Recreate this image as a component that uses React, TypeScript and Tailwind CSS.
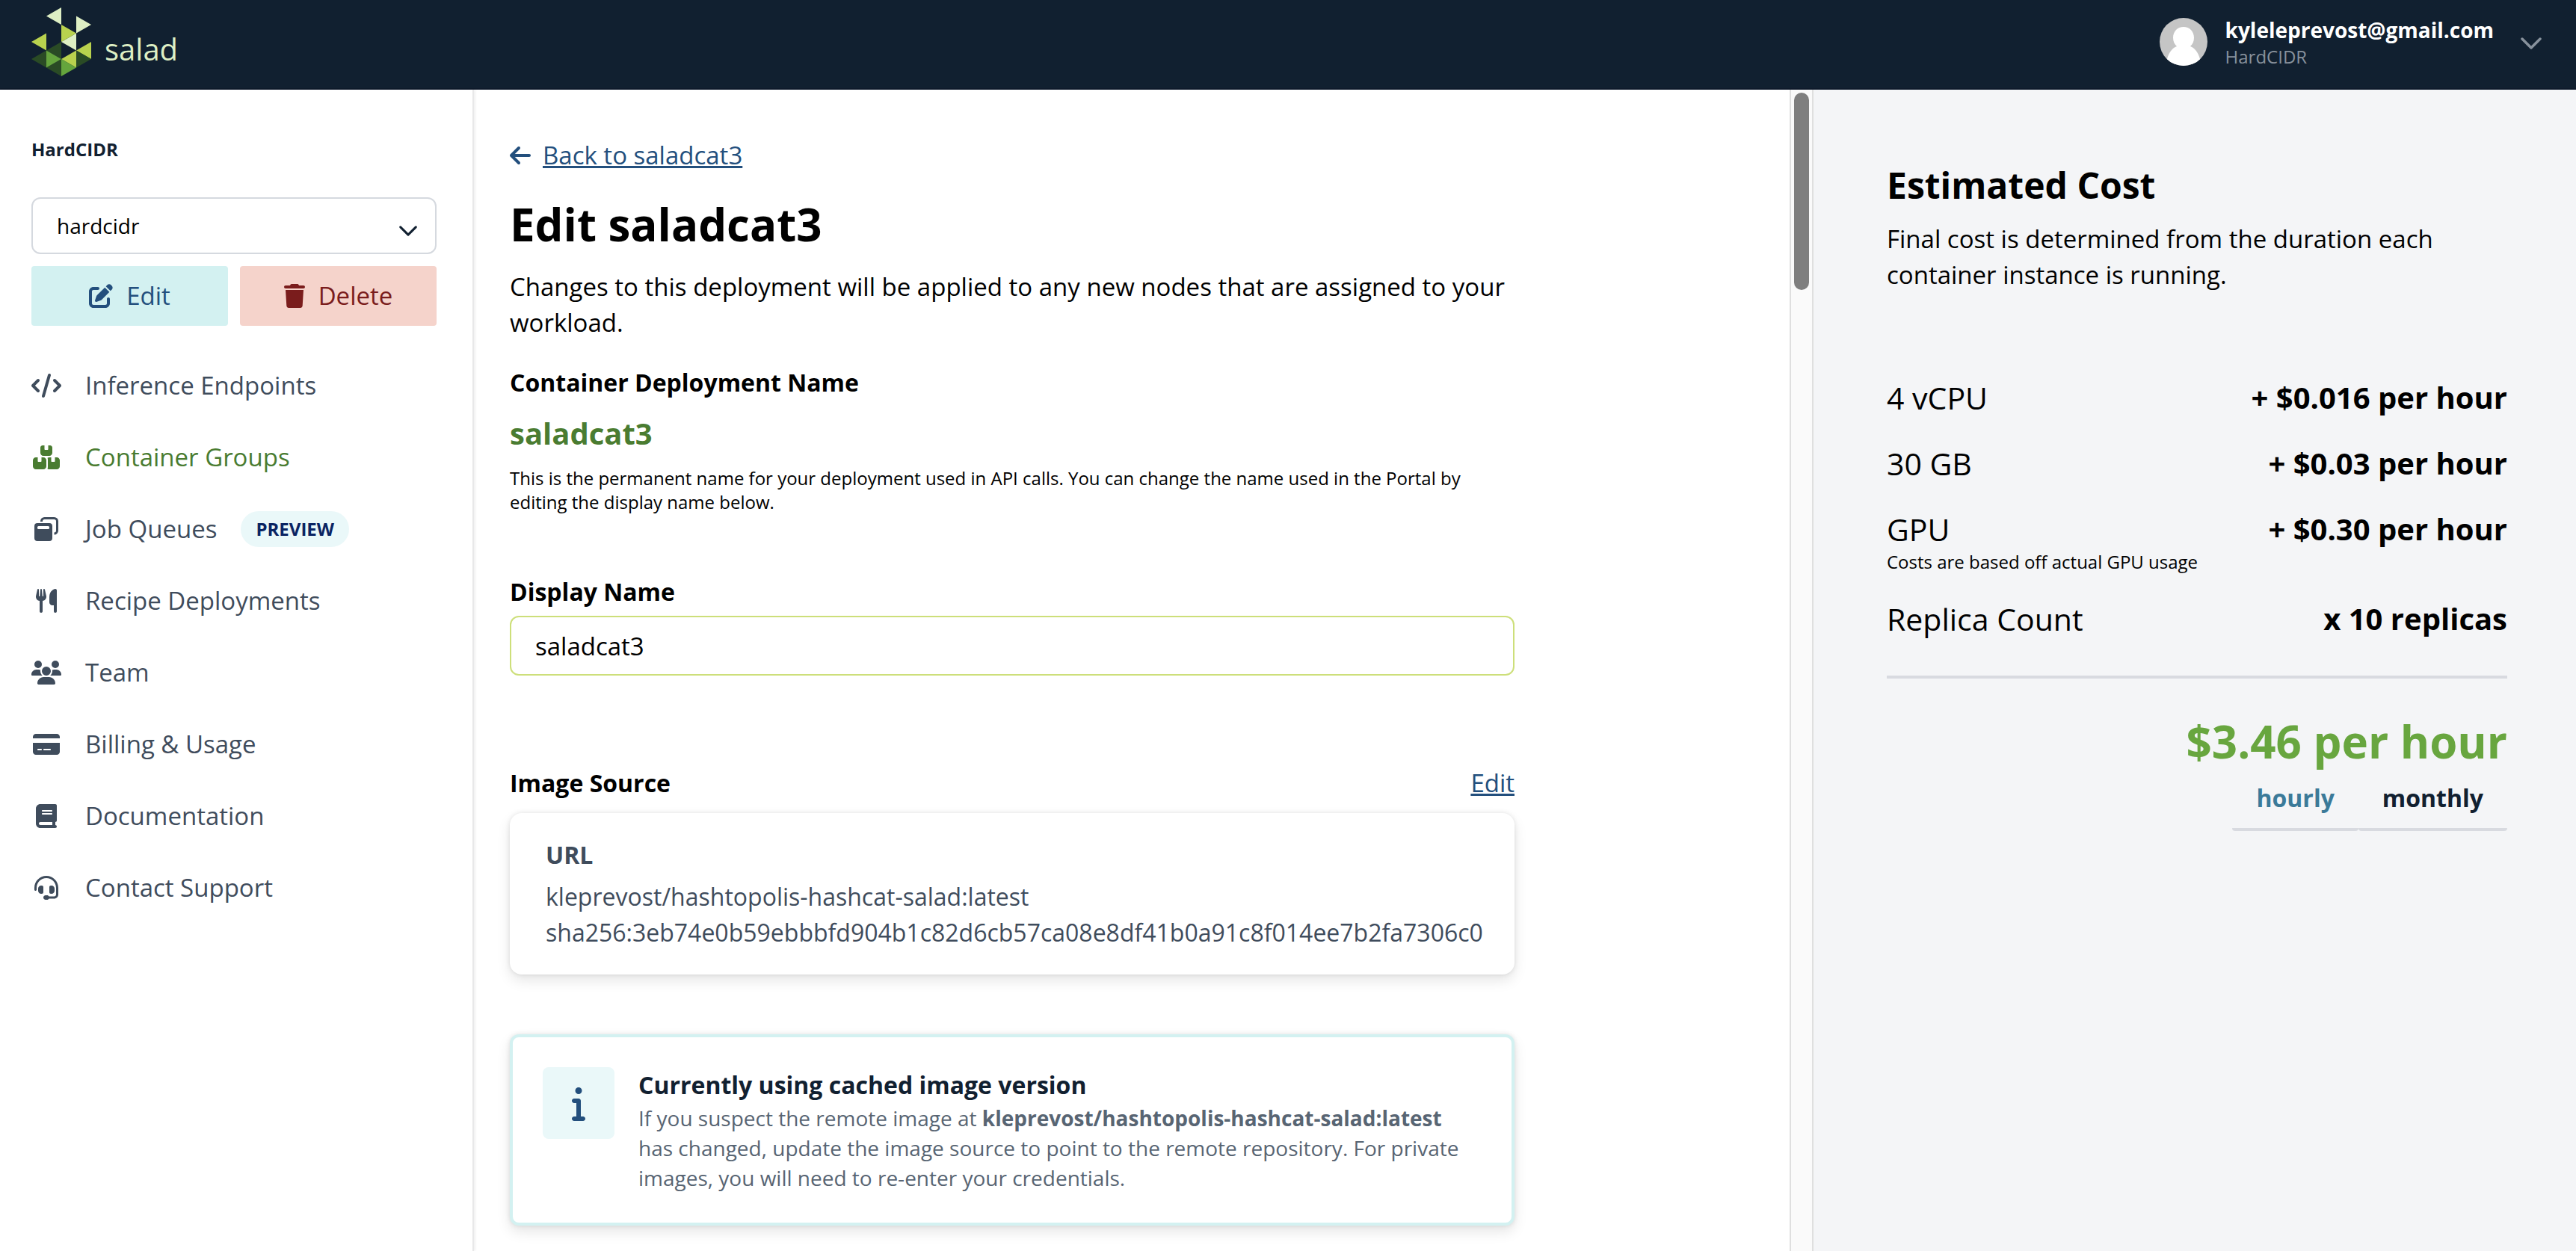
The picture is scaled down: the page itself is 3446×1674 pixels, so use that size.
import { useState } from "react";
import type { ReactNode } from "react";
import {
  FaArrowLeft,
  FaBook,
  FaBoxesStacked,
  FaCode,
  FaCreditCard,
  FaHeadset,
  FaInfo,
  FaPenToSquare,
  FaTrash,
  FaUsers,
  FaUtensils,
} from "react-icons/fa6";

function SaladMark() {
  return (
    <svg viewBox="0 0 80 92" className="h-[92px] w-20" aria-hidden="true">
      <g fill="#deefc4">
        <path d="M40 0 20 11.5 40 23Z" />
        <path d="M60 11.5 80 23 60 34.5Z" />
        <path d="M60 34.5 40 46 60 57.5Z" />
      </g>
      <g fill="#b9d24e">
        <path d="M40 23 60 34.5 40 46Z" />
        <path d="M20 34.5 0 46 20 57.5Z" />
        <path d="M80 46 60 57.5 80 69Z" />
        <path d="M60 57.5 40 69 60 80.5Z" />
      </g>
      <g fill="#2a4b25">
        <path d="M40 46 20 57.5 40 69Z" />
        <path d="M20 57.5 0 69 20 80.5Z" />
        <path d="M40 69 20 80.5 40 92Z" />
        <path d="M80 69 60 57.5V80.5Z" />
      </g>
      <g fill="#65a53d">
        <path d="M20 57.5 40 69 20 80.5Z" />
        <path d="M40 69 60 80.5 40 92Z" />
      </g>
    </svg>
  );
}

function Avatar() {
  return (
    <svg viewBox="0 0 64 64" className="size-16 rounded-full" aria-hidden="true">
      <rect width="64" height="64" fill="#c5c5c5" />
      <path d="M32 12c8 0 14 6 14 14.500 0 5-2 9-5 11.500 6 2 10.500 8 13 17V64H10v-9c2.500-9 7-15 13-17-3-2.500-5-6.500-5-11.500C18 18 24 12 32 12Z" fill="#fff" />
    </svg>
  );
}

function Chevron({ className }: { className: string }) {
  return (
    <svg viewBox="0 0 28 16" className={className} fill="none" stroke="currentColor" strokeWidth="3.500" strokeLinecap="round" strokeLinejoin="round" aria-hidden="true">
      <path d="m2 2 12 12L26 2" />
    </svg>
  );
}

function QueueIcon({ className }: { className?: string }) {
  return (
    <svg viewBox="0 0 32 32" className={className} aria-hidden="true">
      <path d="M9.500 6V5.500A4 4 0 0 1 13.500 1.500H26.500A4 4 0 0 1 30.500 5.500V18A4 4 0 0 1 26.500 22" fill="none" stroke="currentColor" strokeWidth="3" />
      <path fillRule="evenodd" fill="currentColor" d="M4 8h16a4 4 0 0 1 4 4v16a4 4 0 0 1-4 4H4a4 4 0 0 1-4-4V12a4 4 0 0 1 4-4Zm1.500 4a1.500 1.500 0 0 0-1.500 1.500v1A1.500 1.500 0 0 0 5.500 16h13a1.500 1.500 0 0 0 1.500-1.500v-1a1.500 1.500 0 0 0-1.500-1.500Z" />
    </svg>
  );
}

type NavEntry = { label: string; icon: ReactNode; active?: boolean; badge?: string };

const NAV: NavEntry[] = [
  { label: "Inference Endpoints", icon: <FaCode className="h-8 w-10" /> },
  { label: "Container Groups", icon: <FaBoxesStacked className="h-8 w-9" />, active: true },
  { label: "Job Queues", icon: <QueueIcon className="size-8" />, badge: "PREVIEW" },
  { label: "Recipe Deployments", icon: <FaUtensils className="h-8 w-7" /> },
  { label: "Team", icon: <FaUsers className="h-8 w-10" /> },
  { label: "Billing & Usage", icon: <FaCreditCard className="h-8 w-9" /> },
  { label: "Documentation", icon: <FaBook className="h-8 w-7" /> },
  { label: "Contact Support", icon: <FaHeadset className="size-8" /> },
];

function Header() {
  return (
    <header className="flex h-[120px] items-start justify-between border-b-2 border-[#0e1a2b] bg-[#112030] pr-[46px] pl-[42px]">
      <a href="#" className="flex items-start gap-[18px] pt-2.5">
        <SaladMark />
        <span className="pt-7 text-[40px] leading-[56px] text-[#deefc4]">salad</span>
      </a>
      <button type="button" className="flex items-start pt-6 text-left">
        <Avatar />
        <span className="ml-6 flex flex-col gap-1">
          <span className="text-[28px] leading-8 font-bold text-white">kyleleprevost@gmail.com</span>
          <span className="text-2xl leading-8 text-[#87919c]">HardCIDR</span>
        </span>
        <Chevron className="mt-[26px] ml-9 h-4 w-7 text-[#87919c]" />
      </button>
    </header>
  );
}

function Sidebar() {
  return (
    <aside className="w-[634px] shrink-0 border-r-2 border-[#e8e8e9] pr-12 pl-[42px] shadow-[2px_0_3px_rgba(0,0,0,0.06)]">
      <h2 className="pt-16 text-2xl leading-8 font-bold text-[#112030]">HardCIDR</h2>
      <div className="relative mt-12">
        <select aria-label="Project" className="h-[76px] w-full appearance-none rounded-xl border-2 border-[#d5d9df] bg-white pl-8 text-[28px] text-black">
          <option>hardcidr</option>
        </select>
        <Chevron className="pointer-events-none absolute top-[38px] right-[26px] h-3.5 w-6 text-[#112030]" />
      </div>
      <div className="mt-4 grid grid-cols-2 gap-4 text-[33px] leading-10">
        <button type="button" className="flex h-20 items-center justify-center gap-[18px] rounded-sm bg-[#d3f1f1] text-[#234f7d]">
          <FaPenToSquare className="size-8" />
          Edit
        </button>
        <button type="button" className="flex h-20 items-center justify-center gap-[18px] rounded-sm bg-[#f5d3cb] text-[#7a1c1c]">
          <FaTrash className="h-8 w-7" />
          Delete
        </button>
      </div>
      <nav className="mt-8 flex flex-col">
        {NAV.map((item) => (
          <a
            key={item.label}
            href="#"
            className={
              item.active
                ? "flex h-24 items-center text-[33px] leading-10 text-[#4a7c31]"
                : "flex h-24 items-center text-[33px] leading-10 text-[#3f4c5c]"
            }
          >
            <span className="mr-8 flex w-10 justify-center">{item.icon}</span>
            {item.label}
            {item.badge && (
              <span className="ml-8 rounded-full bg-[#eaf8f9] px-5 text-2xl leading-[48px] font-bold text-[#0a2463]">{item.badge}</span>
            )}
          </a>
        ))}
      </nav>
    </aside>
  );
}

function DeploymentForm() {
  return (
    <main className="min-w-0 flex-1 px-12 pt-16 pb-8 text-[33px] leading-[48px] text-black">
      <div className="max-w-[1344px]">
        <a href="#" className="flex items-center gap-4 text-[#234f7d]">
          <FaArrowLeft className="h-8 w-7" />
          <span className="underline">Back to saladcat3</span>
        </a>
        <h1 className="mt-8 text-[60px] leading-[72px] font-bold">Edit saladcat3</h1>
        <p className="mt-6">Changes to this deployment will be applied to any new nodes that are assigned to your workload.</p>

        <h2 className="mt-8 text-[32px] font-bold">Container Deployment Name</h2>
        <p className="mt-5 text-[40px] font-bold text-[#4a7c31]">saladcat3</p>
        <p className="mt-5 text-2xl leading-8">
          This is the permanent name for your deployment used in API calls. You can change the name used in the Portal by editing the display name below.
        </p>

        <label htmlFor="display-name" className="mt-20 block text-[32px] font-bold">
          Display Name
        </label>
        <input
          id="display-name"
          type="text"
          defaultValue="saladcat3"
          className="mt-2 h-20 w-full rounded-xl border-2 border-[#cddf7a] bg-white px-8"
        />

        <div className="mt-[120px] flex justify-between">
          <h2 className="text-[32px] font-bold">Image Source</h2>
          <a href="#" className="text-[#234f7d] underline">
            Edit
          </a>
        </div>
        <section className="mt-4 rounded-2xl bg-white px-12 py-8 text-[32px] whitespace-nowrap text-[#3f4c5c] shadow-[0_0_6px_rgba(0,0,0,0.1),0_8px_18px_rgba(0,0,0,0.1)]">
          <h3 className="font-bold">URL</h3>
          <p className="mt-2">kleprevost/hashtopolis-hashcat-salad:latest</p>
          <p>sha256:3eb74e0b59ebbbfd904b1c82d6cb57ca08e8df41b0a91c8f014ee7b2fa7306c0</p>
        </section>

        <section className="mt-20 flex items-start gap-8 rounded-xl border-4 border-[#d3f1f1] bg-white p-10 shadow-[0_0_6px_rgba(0,0,0,0.1),0_8px_18px_rgba(0,0,0,0.1)]">
          <span className="flex size-24 shrink-0 items-center justify-center rounded-lg bg-[#eaf8f9] text-[#234f7d]">
            <FaInfo className="h-12 w-[18px]" />
          </span>
          <div>
            <h3 className="text-[32px] font-bold text-[#112030]">Currently using cached image version</h3>
            <p className="text-[28px] leading-10 text-[#586573]">
              If you suspect the remote image at <strong className="font-bold">kleprevost/hashtopolis-hashcat-salad:latest</strong> has changed, update the
              image source to point to the remote repository. For private images, you will need to re-enter your credentials.
            </p>
          </div>
        </section>
      </div>
    </main>
  );
}

function Scrollbar() {
  return (
    <div className="w-8 shrink-0 border-x-2 border-[#dfdfdf] bg-[#fafafa] px-1 pt-1" aria-hidden="true">
      <div className="h-[264px] rounded-full bg-[#7f7f7f]" />
    </div>
  );
}

function CostRow({ label, value }: { label: string; value: string }) {
  return (
    <div className="flex justify-between leading-[48px]">
      <dt className="text-[41px]">{label}</dt>
      <dd className="text-[40px] font-bold">{value}</dd>
    </div>
  );
}

function CostPanel() {
  const [period, setPeriod] = useState("hourly");
  return (
    <aside className="w-[1020px] shrink-0 bg-[#f4f5f7] pt-24 pr-[92px] pl-[98px] text-black">
      <h2 className="text-5xl leading-[64px] font-bold">Estimated Cost</h2>
      <p className="mt-4 text-[33px] leading-[48px]">Final cost is determined from the duration each container instance is running.</p>
      <dl className="mt-[116px] flex flex-col gap-8">
        <div className="flex flex-col gap-10">
          <CostRow label="4 vCPU" value="+ $0.016 per hour" />
          <CostRow label="30 GB" value="+ $0.03 per hour" />
          <div>
            <CostRow label="GPU" value="+ $0.30 per hour" />
            <dd className="text-2xl leading-10">Costs are based off actual GPU usage</dd>
          </div>
        </div>
        <CostRow label="Replica Count" value="x 10 replicas" />
      </dl>
      <hr className="mt-[52px] border-t-4 border-[#d8dae0]" />
      <p className="mt-12 text-right text-[60px] leading-[72px] font-bold text-[#68a63f]">$3.46 per hour</p>
      <div className="mt-4 flex justify-end text-[32px] leading-[48px] font-bold" role="tablist">
        {["hourly", "monthly"].map((name) => (
          <button
            key={name}
            type="button"
            role="tab"
            aria-selected={period === name}
            onClick={() => setPeriod(name)}
            className={
              period === name
                ? "rounded-b-sm border-b-4 border-[#d8dae0] px-8 pb-4 text-[#3b7a99]"
                : "rounded-b-sm border-b-4 border-[#d8dae0] px-8 pb-4 text-[#112030]"
            }
          >
            {name}
          </button>
        ))}
      </div>
    </aside>
  );
}

export default function App() {
  return (
    <div className="flex min-h-screen flex-col bg-white font-['Open_Sans',sans-serif]">
      <Header />
      <div className="flex flex-1">
        <Sidebar />
        <DeploymentForm />
        <Scrollbar />
        <CostPanel />
      </div>
    </div>
  );
}
